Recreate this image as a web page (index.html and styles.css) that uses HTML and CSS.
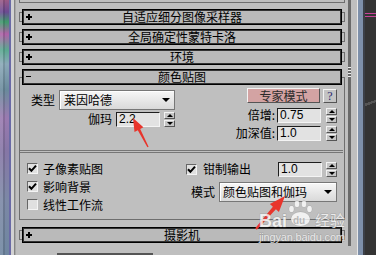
FILE: index.html
```html
<!DOCTYPE html>
<html lang="zh">
<head>
    <meta charset="UTF-8">
    <meta name="viewport" content="width=device-width, initial-scale=1.0">
    <title>颜色贴图</title>
    <link rel="stylesheet" href="styles.css">
</head>
<body>
    <div class="vp-left"></div>
    <div class="edge-left"></div>

    <div class="panel">
        <div class="stub"></div>

        <div class="rollout"><span class="brk"></span><div class="head"><b class="plus"></b><span>自适应细分图像采样器</span></div><span class="brk r"></span></div>
        <div class="rollout"><span class="brk"></span><div class="head"><b class="plus"></b><span>全局确定性蒙特卡洛</span></div><span class="brk r"></span></div>
        <div class="rollout"><span class="brk"></span><div class="head"><b class="plus"></b><span>环境</span></div><span class="brk r"></span></div>

        <div class="open">
            <div class="head"><b class="minus"></b><span>颜色贴图</span></div>

            <div class="top">
                <div class="col-l">
                    <div class="row tall">
                        <label>类型</label>
                        <div class="combo type"><span>莱因哈德</span><i></i></div>
                    </div>
                    <div class="row">
                        <label>伽玛</label>
                        <div class="field">2.2</div>
                        <div class="spin"><i></i><i></i></div>
                    </div>
                </div>
                <div class="col-r">
                    <div class="row btns">
                        <button class="expert">专家模式</button>
                        <button class="help">?</button>
                    </div>
                    <div class="row mul">
                        <label>倍增:</label>
                        <div class="field">0.75</div>
                        <div class="spin"><i></i><i></i></div>
                    </div>
                    <div class="row deep">
                        <label>加深值:</label>
                        <div class="field">1.0</div>
                        <div class="spin"><i></i><i></i></div>
                    </div>
                </div>
            </div>

            <div class="sep"></div>

            <div class="bottom">
                <div class="checks">
                    <div class="check"><span class="chk"><svg width="9" height="9" viewBox="0 0 9 9"><polyline points="1,4.2 3.4,6.8 8,1.6" fill="none" stroke="#000" stroke-width="2"/></svg></span>子像素贴图</div>
                    <div class="check"><span class="chk"><svg width="9" height="9" viewBox="0 0 9 9"><polyline points="1,4.2 3.4,6.8 8,1.6" fill="none" stroke="#000" stroke-width="2"/></svg></span>影响背景</div>
                    <div class="check"><span class="chk"></span>线性工作流</div>
                </div>
                <div class="clamp">
                    <div class="row clamp-out">
                        <span class="chk"><svg width="9" height="9" viewBox="0 0 9 9"><polyline points="1,4.2 3.4,6.8 8,1.6" fill="none" stroke="#000" stroke-width="2"/></svg></span>
                        <label>钳制输出</label>
                        <div class="field push">1.0</div>
                        <div class="spin"><i></i><i></i></div>
                    </div>
                    <div class="row tall mode">
                        <label>模式</label>
                        <div class="combo grow"><span>颜色贴图和伽玛</span><i></i></div>
                    </div>
                </div>
            </div>
        </div>

        <div class="rollout cam"><span class="brk"></span><div class="head"><b class="plus"></b><span>摄影机</span></div><span class="brk r"></span></div>
        <div class="next"></div>
    </div>

    <div class="rail"><div class="thumb"><div class="grip"></div></div></div>
    <div class="vp-right"></div>

    <svg class="overlay" width="376" height="255" viewBox="0 0 376 255">
        <!-- red arrows -->
        <polygon fill="#e8352c" points="133,118 143.4,127.3 140.2,129 148.6,146.7 147.4,147.3 137.8,130.2 134.5,131.9"/>
        <polygon fill="#e8352c" points="285,196 269.9,204 272.9,206.7 255.2,228.3 256.8,229.7 275.9,209.3 278.9,212"/>
        <!-- watermark -->
        <g class="wm">
            <text x="259" y="227" font-size="18" font-weight="bold">Bai</text>
            <ellipse cx="291.5" cy="209" rx="2.4" ry="3.3"/>
            <ellipse cx="297" cy="204" rx="2.4" ry="3.3"/>
            <ellipse cx="304" cy="204" rx="2.4" ry="3.3"/>
            <ellipse cx="309.5" cy="209" rx="2.4" ry="3.3"/>
            <ellipse cx="300.5" cy="219" rx="9.5" ry="7"/>
            <text class="du" x="293" y="224" font-size="10" font-weight="bold">du</text>
            <text class="cjk" x="315" y="226" font-size="15">经验</text>
            <text x="259" y="241" font-size="11" textLength="86">jingyan.baidu.com</text>
        </g>
    </svg>
</body>
</html>
```

FILE: styles.css
```css
* {
    box-sizing: border-box;
}
body {
    margin: 0;
    width: 376px;
    height: 255px;
    overflow: hidden;
    position: relative;
    display: flex;
    background: #bfbfbf;
    font: 12px/14px "Noto Sans CJK SC", sans-serif;
    color: #000;
}

/* viewports and edges */
.vp-left {
    width: 9px;
    flex: none;
    background:
        linear-gradient(to right, rgba(255,255,255,0.1) 0 3px, rgba(0,0,0,0.12) 3px 5px, transparent 5px),
        linear-gradient(to bottom, #9a5a86 0, #6a4a92 12px, #3f9a6c 22px, #b060a8 34px, #5aa890 50px, #8aa8b8 64px, #6a8a9c 90px, #9a7ab0 118px, #8676a6 150px, #7c88a6 200px, #6f86a0 255px);
}
.edge-left {
    width: 7px;
    flex: none;
    background: linear-gradient(to right, #6a6aa6 0 2px, #d2d2d2 2px 5px, #858585 5px 6px, #a8a8a8 6px);
}
.rail {
    width: 17px;
    flex: none;
    background: linear-gradient(to right, #bfbfbf 0 9px, #e8e8e8 9px 10px, #7e90aa 10px 15px, #3c4048 15px);
}
.thumb {
    width: 3px;
    height: 246px;
    background: #6a6a6a;
    padding-top: 67px;
}
.grip {
    height: 10px;
    background: repeating-linear-gradient(to bottom, #f0f0f0 0 1px, transparent 1px 3px);
}
.vp-right {
    flex: 1;
    background:
        linear-gradient(to bottom, transparent 13px, #c8449a 13px 14px, transparent 14px 16px, #c8449a 16px 17px, transparent 17px),
        linear-gradient(160deg, transparent 40%, #555 40% 41%, transparent 41%),
        #343434;
}

/* command panel */
.panel {
    width: 332px;
    flex: none;
    display: flex;
    flex-direction: column;
}
.stub {
    height: 3px;
    margin: 0 3px 2px;
    border: 1px solid #6e6e6e;
    border-top: 0;
}
.rollout {
    display: flex;
    align-items: center;
    height: 16px;
    margin: 4px 3px 0;
}
.rollout.cam {
    margin-top: 7px;
}
.brk {
    width: 3px;
    height: 10px;
    flex: none;
    border: 1px solid #6e6e6e;
    border-right: 0;
}
.brk.r {
    border-left: 0;
    border-right: 1px solid #6e6e6e;
}
.head {
    flex: 1;
    height: 16px;
    border: 1px solid #000;
    box-shadow: inset 0 0 0 1px #333;
    background: #bababa;
    display: grid;
    grid-template-columns: 14px 1fr 14px;
    align-items: center;
}
.head span {
    text-align: center;
}
.plus {
    width: 6px;
    height: 6px;
    margin-left: 3px;
    background:
        linear-gradient(#000, #000) center / 6px 2px no-repeat,
        linear-gradient(#000, #000) center / 2px 6px no-repeat;
}
.minus {
    width: 5px;
    height: 1px;
    margin-left: 3px;
    background: #000;
}

/* open rollout */
.open {
    margin: 12px 3px 0;
    border: 1px solid #6e6e6e;
}
.open .head {
    margin: -9px 2px 0 2px;
}
.top {
    height: 65px;
    display: grid;
    grid-template-columns: 156px 1fr;
    padding-right: 7px;
}
.row {
    display: flex;
    align-items: center;
    justify-content: flex-end;
    gap: 4px;
    height: 15px;
}
.row.tall {
    height: 20px;
}
.col-l {
    padding: 5px 1px 0 0;
    display: flex;
    flex-direction: column;
    gap: 2px;
}
.col-r {
    padding-top: 3px;
    display: flex;
    flex-direction: column;
}
.btns {
    gap: 3px;
}
.mul {
    margin-top: 5px;
}
.deep {
    margin-top: 3px;
}
.mul, .deep {
    gap: 0;
}
.mul label, .deep label {
    margin-right: 2px;
}
.mul .spin, .deep .spin {
    margin-left: 5px;
}

.combo {
    height: 20px;
    display: flex;
    align-items: center;
    justify-content: space-between;
    padding: 0 4px;
    border: 1px solid #777;
    box-shadow: inset 1px 1px #fff;
    background: linear-gradient(#f7f7f7, #d9d9d9);
}
.combo.type {
    width: 116px;
}
.combo i {
    width: 0;
    height: 0;
    border-left: 4px solid transparent;
    border-right: 4px solid transparent;
    border-top: 4px solid #000;
}
.field {
    width: 44px;
    height: 15px;
    flex: none;
    padding-left: 2px;
    background: #e2e2e2;
    border: 1px solid;
    border-color: #1e1e1e #f4f4f4 #f4f4f4 #1e1e1e;
    font: 12px/13px "Liberation Sans", sans-serif;
}
.spin {
    width: 11px;
    height: 15px;
    flex: none;
    display: flex;
    flex-direction: column;
    gap: 1px;
}
.spin i {
    flex: 1;
    display: flex;
    align-items: center;
    justify-content: center;
    background: #c6c6c6;
    border: 1px solid;
    border-color: #f2f2f2 #555 #555 #f2f2f2;
}
.spin i::after {
    content: "";
    border-left: 3px solid transparent;
    border-right: 3px solid transparent;
    border-bottom: 3px solid #000;
}
.spin i + i::after {
    border-bottom: 0;
    border-top: 3px solid #000;
}
button {
    height: 15px;
    padding: 0;
    border: 1px solid;
    border-color: #f4f4f4 #555 #555 #f4f4f4;
    font: 12px/13px "Noto Sans CJK SC", sans-serif;
}
.expert {
    width: 73px;
    background: #d3a3a3;
    color: #2a2a2a;
}
.help {
    width: 14px;
    height: 14px;
    align-self: flex-end;
    background: #c4c4c4;
    color: #28286e;
    font-family: "Liberation Serif", serif;
}

.sep {
    height: 3px;
    margin-right: 1px;
    border-top: 1px solid #767676;
    border-bottom: 1px solid #767676;
}

.bottom {
    height: 66px;
    display: grid;
    grid-template-columns: 166px 1fr;
    padding-right: 7px;
}
.checks {
    padding: 7px 0 0 7px;
}
.check {
    height: 18px;
    display: flex;
    align-items: center;
    gap: 5px;
}
.check + .check {
    margin-top: 0;
}
.chk {
    width: 11px;
    height: 11px;
    flex: none;
    display: flex;
    align-items: center;
    justify-content: center;
    background: #e0e0e0;
    border: 1px solid;
    border-color: #666 #f4f4f4 #f4f4f4 #666;
}
.clamp {
    padding-top: 9px;
}
.clamp-out {
    justify-content: flex-start;
    gap: 6px;
}
.clamp-out .push {
    margin-left: auto;
}
.clamp-out .spin {
    margin-left: -2px;
}
.mode {
    margin-top: 5px;
    padding-left: 5px;
    justify-content: flex-start;
}
.combo.grow {
    flex: 1;
    padding-left: 3px;
}
.next {
    width: 96px;
    height: 3px;
    margin: 10px 0 0 41px;
    background: #555;
}

/* annotations lying over the screenshot */
.overlay {
    position: absolute;
    left: 0;
    top: 0;
    pointer-events: none;
}
.wm {
    fill: #fff;
    fill-opacity: 0.78;
    stroke: #777;
    stroke-opacity: 0.35;
    stroke-width: 1;
    paint-order: stroke;
    font-family: "Liberation Sans", sans-serif;
}
.wm .du {
    fill: #a8a8a8;
    stroke: none;
}
.wm .cjk {
    font-family: "Noto Sans CJK SC", sans-serif;
}
```
